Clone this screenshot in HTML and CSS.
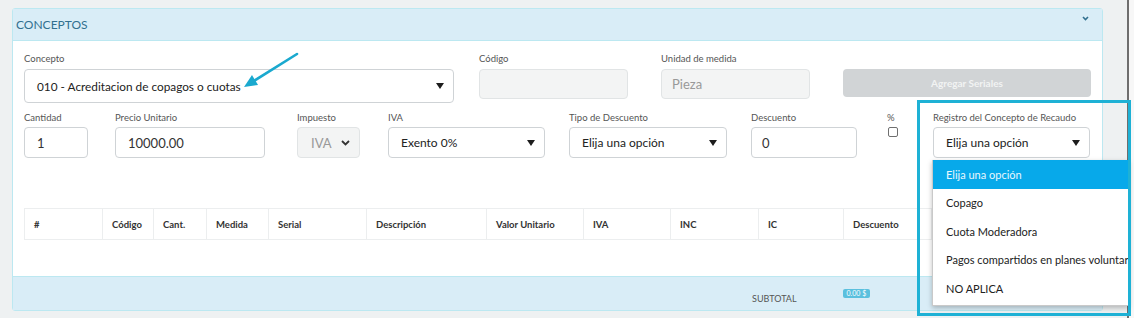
FILE: index.html
```html
<!DOCTYPE html>
<html lang="es">
  <head>
    <meta charset="UTF-8">
    <meta name="viewport" content="width=device-width, initial-scale=1.0">
    <title>Conceptos</title>
    <link rel="stylesheet" href="styles.css">
  </head>
  <body>
    <div class="page">
      <div class="workspace">
        <section class="panel">
          <div class="panel-heading">
            <span class="panel-title">CONCEPTOS</span>
            <svg class="collapse-icon" width="7" height="5" viewBox="0 0 7 5"><path d="M1 1 L3.5 3.5 L6 1" fill="none" stroke="#31708f" stroke-width="1.6"/></svg>
          </div>
          <div class="panel-body">
            <!-- fila 1 -->
            <div class="form-row">
              <div class="field f-concepto">
                <label>Concepto</label>
                <div class="control select tall">
                  <span>010 - Acreditacion de copagos o cuotas</span>
                  <i class="caret"></i>
                </div>
              </div>
              <div class="field f-codigo">
                <label>Código</label>
                <div class="control disabled"></div>
              </div>
              <div class="field f-unidad">
                <label>Unidad de medida</label>
                <div class="control disabled"><span class="muted">Pieza</span></div>
              </div>
              <div class="field f-boton">
                <label>&nbsp;</label>
                <button class="btn-serial" type="button">Agregar Seriales</button>
              </div>
            </div>
            <!-- fila 2 -->
            <div class="form-row second">
              <div class="field f-cantidad">
                <label>Cantidad</label>
                <div class="control"><span>1</span></div>
              </div>
              <div class="field f-precio">
                <label>Precio Unitario</label>
                <div class="control"><span>10000.00</span></div>
              </div>
              <div class="field f-impuesto">
                <label>Impuesto</label>
                <div class="control disabled">
                  <span class="muted">IVA</span>
                  <svg width="9" height="6" viewBox="0 0 9 6"><path d="M1 1 L4.5 4.5 L8 1" fill="none" stroke="#333" stroke-width="1.8"/></svg>
                </div>
              </div>
              <div class="field f-iva">
                <label>IVA</label>
                <div class="control select"><span>Exento 0%</span><i class="caret"></i></div>
              </div>
              <div class="field f-tipo">
                <label>Tipo de Descuento</label>
                <div class="control select"><span>Elija una opción</span><i class="caret"></i></div>
              </div>
              <div class="field f-descuento">
                <label>Descuento</label>
                <div class="control"><span>0</span></div>
              </div>
              <div class="field f-pct">
                <label>%</label>
                <span class="checkbox"></span>
              </div>
              <div class="field f-registro">
                <label>Registro del Concepto de Recaudo</label>
                <div class="control select"><span>Elija una opción</span><i class="caret"></i></div>
                <ul class="options">
                  <li class="active">Elija una opción</li>
                  <li>Copago</li>
                  <li>Cuota Moderadora</li>
                  <li>Pagos compartidos en planes voluntarios</li>
                  <li>NO APLICA</li>
                </ul>
              </div>
            </div>

            <table class="items">
              <thead>
                <tr>
                  <th class="c-num">#</th>
                  <th class="c-cod">Código</th>
                  <th class="c-cant">Cant.</th>
                  <th class="c-med">Medida</th>
                  <th class="c-ser">Serial</th>
                  <th class="c-desc">Descripción</th>
                  <th class="c-val">Valor Unitario</th>
                  <th class="c-iva">IVA</th>
                  <th class="c-inc">INC</th>
                  <th class="c-ic">IC</th>
                  <th class="c-dto">Descuento</th>
                  <th></th>
                </tr>
              </thead>
            </table>
          </div>
          <div class="panel-footer">
            <span class="subtotal">SUBTOTAL</span>
            <span class="badge">0.00 $</span>
          </div>
        </section>
      </div>
      <div class="scroll-edge"></div>

      <div class="highlight"></div>
      <svg class="pointer" width="62" height="42" viewBox="0 0 62 42">
        <line x1="57" y1="4" x2="13" y2="31.5" stroke="#1aa9cf" stroke-width="2.6" stroke-linecap="round"/>
        <polygon points="4,37 12,25 18,35" fill="#1aa9cf"/>
      </svg>
    </div>
  </body>
</html>
```

FILE: styles.css
```css
body {
  margin: 0;
  background: #eef1f2;
  font-family: Lato, "Open Sans", sans-serif;
  color: #333;
}

.page {
  position: relative;
  display: flex;
  height: 318px;
  overflow: hidden;
}

.workspace {
  width: 1127px;
  padding: 8px 24px 0 12px;
  box-sizing: border-box;
  background: #eef1f2;
}

.scroll-edge {
  width: 7px;
  border-left: 2px solid #6e6e6e;
  background: #f7f7f7;
}

/* panel */
.panel {
  border: 1px solid #bce8f1;
  border-radius: 3px;
  background: #fff;
  width: 1091px;
  box-sizing: border-box;
}

.panel-heading {
  display: flex;
  align-items: center;
  justify-content: space-between;
  padding: 0 13px 0 3px;
  background: #d9edf7;
  border-bottom: 1px solid #bce8f1;
  box-sizing: border-box;
  height: 32px;
}

.panel-title {
  color: #31708f;
  font-size: 12px;
  margin-top: 0;
}

.collapse-icon {
  margin-top: -12px;
}

.panel-body {
  padding: 12px 11px 36px 11px;
}

.panel-footer {
  background: #d9edf7;
  border-top: 1px solid #bce8f1;
  display: flex;
  align-items: flex-start;
  padding-left: 739px;
  box-sizing: border-box;
  height: 34px;
}

.subtotal {
  font-size: 9px;
  color: #555;
  margin-top: 16px;
}

.badge {
  margin-left: 46px;
  margin-top: 12px;
  background: #5bc0de;
  color: #fff;
  font-size: 7px;
  line-height: 9px;
  padding: 0 4px;
  border-radius: 2px;
}

/* formulario */
.form-row {
  display: flex;
  align-items: flex-start;
}

.form-row.second {
  margin-top: 9px;
}

.field {
  position: relative;
  flex: none;
}

.field label {
  display: block;
  font-size: 9.5px;
  line-height: 12px;
  color: #555;
  margin-bottom: 4px;
  white-space: nowrap;
}

.second .field label {
  margin-bottom: 3px;
}

.control {
  height: 31px;
  border: 1px solid #cfd3d6;
  border-radius: 4px;
  box-sizing: border-box;
  display: flex;
  align-items: center;
  justify-content: space-between;
  padding: 0 9px 0 12px;
  font-size: 13px;
  color: #333;
  background: #fff;
}

.control.select {
  font-size: 12px;
  color: #222;
}

.control.tall {
  height: 34px;
  padding-left: 12px;
  font-size: 11.8px;
}

.control.disabled {
  background: #f3f4f4;
  border-color: #e1e4e5;
}

.f-codigo .control, .f-unidad .control {
  height: 30px;
  padding-left: 10px;
}

.muted {
  color: #999;
}

.caret {
  width: 0;
  height: 0;
  border-left: 4px solid transparent;
  border-right: 4px solid transparent;
  border-top: 6px solid #1d1d1d;
}

.f-concepto { width: 430px; margin-right: 25px; }
.f-codigo { width: 149px; margin-right: 33px; }
.f-unidad { width: 149px; margin-right: 33px; }
.f-boton { width: 248px; }

.btn-serial {
  width: 100%;
  height: 28px;
  border: none;
  border-radius: 4px;
  background: #d1d4d6;
  color: #f2f3f3;
  font-family: inherit;
  font-size: 10px;
  font-weight: bold;
}

.f-cantidad { width: 64px; margin-right: 27px; }
.f-precio { width: 150px; margin-right: 32px; }
.f-impuesto { width: 63px; margin-right: 28px; }
.f-iva { width: 157px; margin-right: 24px; }
.f-tipo { width: 158px; margin-right: 24px; }
.f-descuento { width: 106px; margin-right: 30px; }
.f-pct { width: 46px; }
.f-registro { width: 157px; }

.f-impuesto .control {
  padding: 0 9px 0 13px;
}

.f-descuento .control {
  padding-left: 10px;
}

.checkbox {
  display: block;
  width: 8px;
  height: 8px;
  margin: 2px 0 0 1px;
  border: 1px solid #6f6f6f;
  border-radius: 2px;
  background: #fff;
}

/* lista desplegada */
.options {
  position: absolute;
  left: -1px;
  top: 48px;
  width: 196px;
  margin: 0;
  padding: 0 0 2px 0;
  list-style: none;
  background: #fff;
  border: 1px solid #c9c9c9;
  border-top: none;
  border-right: none;
  box-shadow: 0 2px 5px rgba(0, 0, 0, 0.25);
  overflow: hidden;
  z-index: 2;
}

.options li {
  height: 28.5px;
  line-height: 28.5px;
  padding-left: 13px;
  font-size: 11px;
  color: #222;
  white-space: nowrap;
  overflow: hidden;
}

.options li.active {
  height: 29px;
  line-height: 29px;
  background: #07a9ea;
  color: #e9f7fd;
}

/* tabla */
.items {
  margin-top: 50px;
  width: 100%;
  border-collapse: collapse;
  table-layout: fixed;
}

.items th {
  height: 31px;
  padding: 0 0 0 9px;
  border: 1px solid #eceeef;
  text-align: left;
  font-size: 9.5px;
  font-weight: bold;
  color: #333;
  white-space: nowrap;
  box-sizing: border-box;
}

.c-num { width: 78px; }
.c-cod { width: 51px; }
.c-cant { width: 53px; }
.c-med { width: 62px; }
.c-ser { width: 98px; }
.c-desc { width: 120px; }
.c-val { width: 97px; }
.c-iva { width: 87px; }
.c-inc { width: 88px; }
.c-ic { width: 85px; }
.c-dto { width: 88px; }

/* anotaciones */
.highlight {
  position: absolute;
  left: 917px;
  top: 100px;
  width: 208px;
  height: 210px;
  border: 3px solid #1eb1d5;
  z-index: 3;
}

.pointer {
  position: absolute;
  left: 240px;
  top: 50px;
  z-index: 3;
}
```
